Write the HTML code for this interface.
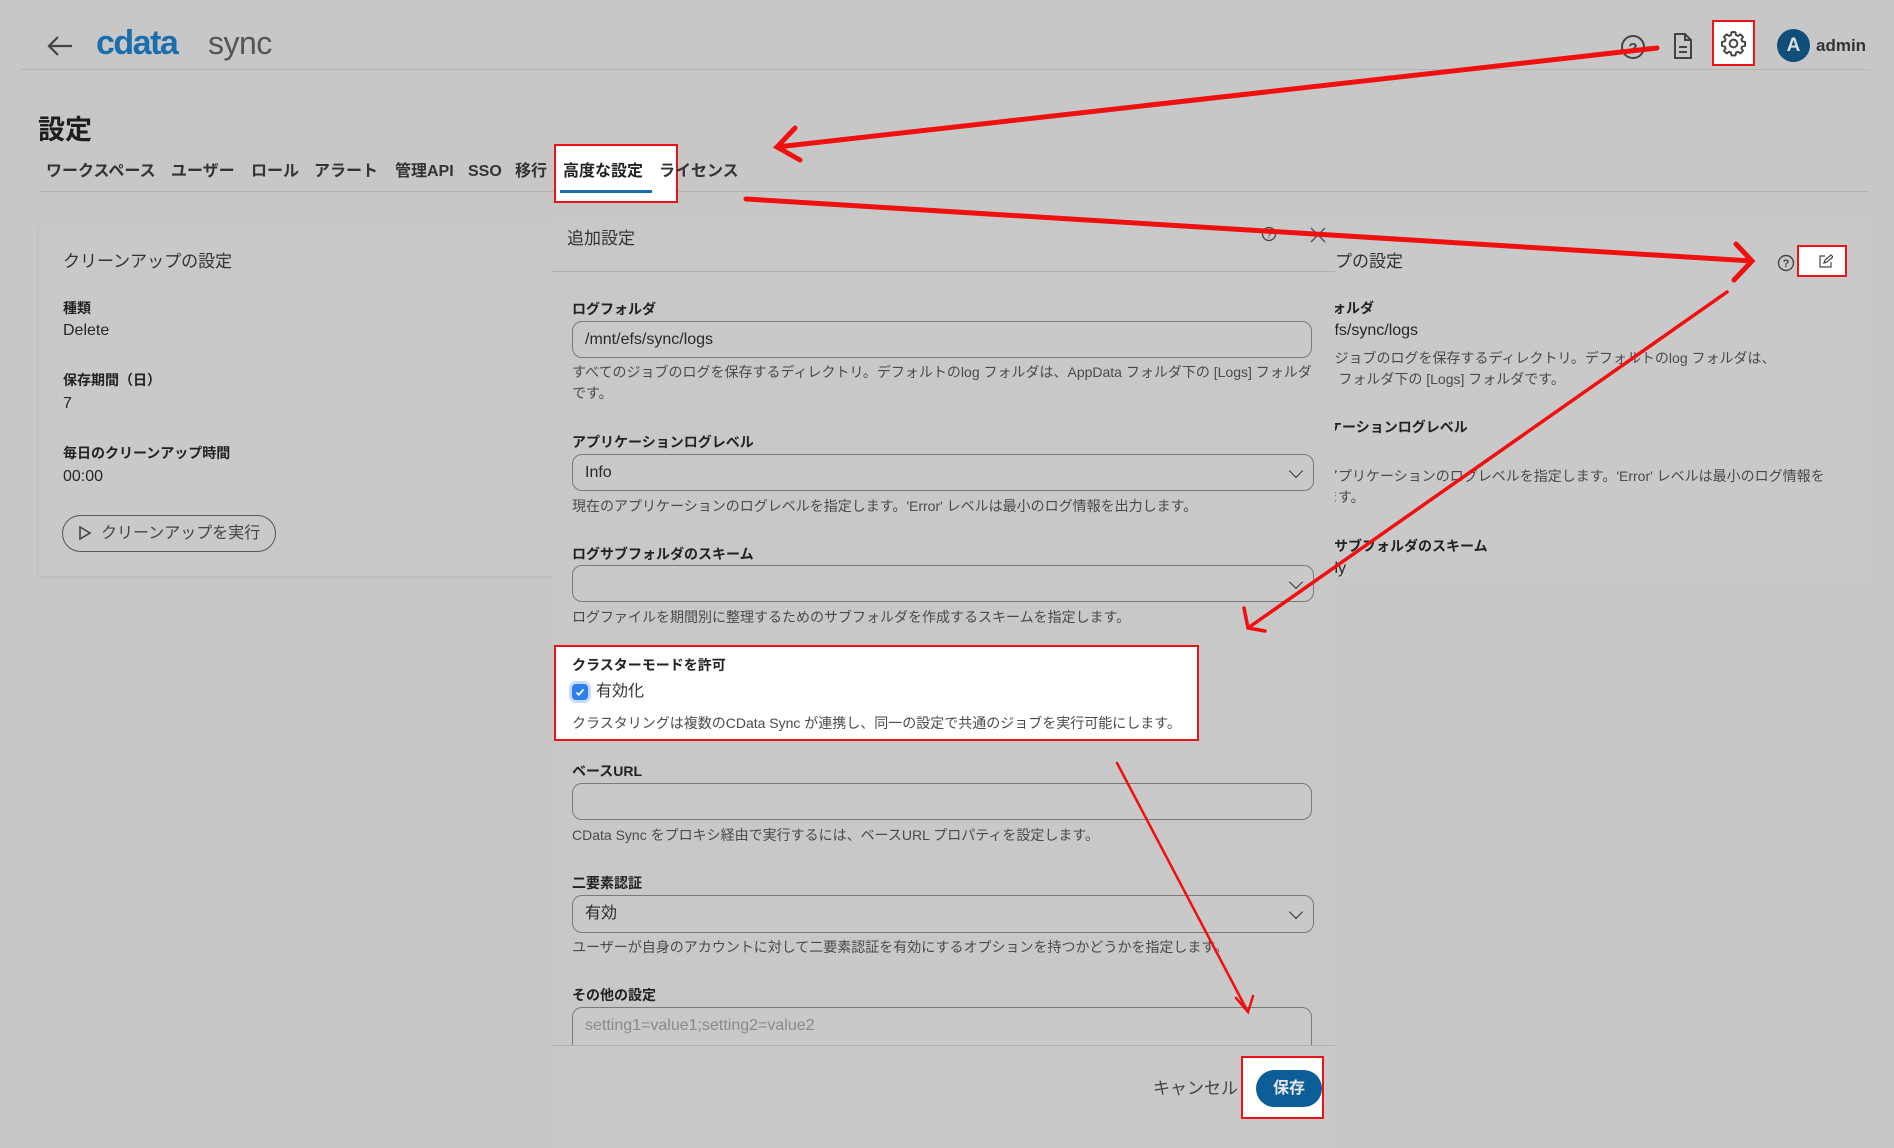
<!DOCTYPE html>
<html><head><meta charset="utf-8">
<style>
*{margin:0;padding:0;box-sizing:border-box}
body{width:1894px;height:1148px;background:#c7c7c7;font-family:"Liberation Sans","Noto Sans CJK JP",sans-serif;color:#262626;position:relative;overflow:hidden}
.a{position:absolute;white-space:nowrap}
.lbl{font-size:14px;font-weight:bold;color:#222}
.help{font-size:14px;color:#4a4a4a}
.inp{position:absolute;left:572px;width:740px;border:1px solid #7a7a7a;border-radius:10px;background:#c9c9c9;font-size:16px;padding-left:12px;color:#2a2a2a}
.chev{position:absolute;right:12px;top:50%;width:10px;height:10px;border-right:1.6px solid #333;border-bottom:1.6px solid #333;transform:translateY(-70%) rotate(45deg)}
.tab{font-size:16px;font-weight:bold;color:#333;top:162px;line-height:20px}
.red{position:absolute;border:2px solid #e8141a;background:#fff}
</style></head><body>
<!-- header -->
<div class="a" style="left:20px;top:69px;width:1850px;height:1px;background:#b5b5b5"></div>
<svg class="a" style="left:46px;top:34px" width="28" height="24" viewBox="0 0 28 24"><path d="M26 12H3M12 3L3 12l9 9" stroke="#444" stroke-width="2.2" fill="none"/></svg>
<div class="a" style="left:96px;top:24px;font-size:34px;font-weight:bold;color:#1a6eae;letter-spacing:-1.5px">cdata</div>
<div class="a" style="left:208px;top:25px;font-size:32px;color:#555;letter-spacing:-0.5px">sync</div>
<svg class="a" style="left:1619px;top:33px" width="28" height="28" viewBox="0 0 28 28"><circle cx="14" cy="14" r="11" stroke="#444" stroke-width="2" fill="none"/><text x="14" y="20" text-anchor="middle" font-size="15" font-weight="bold" fill="#444" font-family="Liberation Sans">?</text></svg>
<svg class="a" style="left:1672px;top:32px" width="22" height="28" viewBox="0 0 22 28"><path d="M3 2h10l6 6v18H3z M13 2v6h6 M7 15h8M7 20h8" stroke="#444" stroke-width="2" fill="none"/></svg>
<div class="red" style="left:1712px;top:20px;width:43px;height:46px"></div>
<svg class="a" style="left:1719px;top:29px" width="29" height="29" viewBox="0 0 24 24"><path d="M12 2.5l1.6.2.5 2.4 1.6.7 2-1.4 2.2 2.2-1.4 2 .7 1.6 2.4.5v3.2l-2.4.5-.7 1.6 1.4 2-2.2 2.2-2-1.4-1.6.7-.5 2.4h-3.2l-.5-2.4-1.6-.7-2 1.4-2.2-2.2 1.4-2-.7-1.6-2.4-.5v-3.2l2.4-.5.7-1.6-1.4-2 2.2-2.2 2 1.4 1.6-.7.5-2.4z" stroke="#444" stroke-width="1.6" fill="none" stroke-linejoin="round"/><circle cx="12" cy="12" r="3.2" stroke="#444" stroke-width="1.6" fill="none"/></svg>
<div class="a" style="left:1777px;top:29px;width:33px;height:33px;border-radius:50%;background:#0f4f7a;color:#ddd;font-size:19px;font-weight:bold;text-align:center;line-height:33px">A</div>
<div class="a" style="left:1816px;top:36px;font-size:17px;font-weight:bold;color:#333">admin</div>

<div class="a" style="left:38px;top:108px;font-size:27px;font-weight:bold;color:#1e1e1e">設定</div>
<div class="a" style="left:39px;top:191px;width:1830px;height:1px;background:#b3b3b3"></div>
<div class="red" style="left:554px;top:144px;width:124px;height:59px"></div>
<div class="a tab" style="left:46px">ワークスペース</div>
<div class="a tab" style="left:171px">ユーザー</div>
<div class="a tab" style="left:251px">ロール</div>
<div class="a tab" style="left:314px">アラート</div>
<div class="a tab" style="left:395px">管理API</div>
<div class="a tab" style="left:468px">SSO</div>
<div class="a tab" style="left:515px">移行</div>
<div class="a tab" style="left:563px;color:#222">高度な設定</div>
<div class="a" style="left:560px;top:190px;width:92px;height:3px;background:#1a6eae"></div>
<div class="a tab" style="left:659px">ライセンス</div>

<!-- left card -->
<div class="a" style="left:39px;top:223px;width:530px;height:353px;background:#c9c9c9;box-shadow:0 1px 3px rgba(0,0,0,.08)"></div>
<div class="a" style="left:63px;top:247px;font-size:17px;color:#333">クリーンアップの設定</div>
<div class="a lbl" style="left:63px;top:298px">種類</div>
<div class="a" style="left:63px;top:322px;font-size:16px">Delete</div>
<div class="a lbl" style="left:63px;top:370px">保存期間（日）</div>
<div class="a" style="left:63px;top:395px;font-size:16px">7</div>
<div class="a lbl" style="left:63px;top:443px">毎日のクリーンアップ時間</div>
<div class="a" style="left:63px;top:468px;font-size:16px">00:00</div>
<div class="a" style="left:62px;top:515px;width:214px;height:37px;border:1.3px solid #555;border-radius:19px;font-size:16px;color:#444;padding:8px 0 0 38px;line-height:20px">クリーンアップを実行</div>
<svg class="a" style="left:78px;top:525px" width="14" height="16" viewBox="0 0 14 16"><path d="M2 2l10 6-10 6z" stroke="#444" stroke-width="1.6" fill="none"/></svg>

<!-- right card -->
<div class="a" style="left:1290px;top:223px;width:580px;height:354px;background:#c9c9c9"></div>
<div class="a" style="left:1318px;top:247px;font-size:17px;color:#333">ップの設定</div>
<div class="a lbl" style="left:1290px;top:298px">ログフォルダ</div>
<div class="a" style="left:1290px;top:322px;font-size:16px">/mnt/efs/sync/logs</div>
<div class="a help" style="left:1280px;top:348px;line-height:21px">すべてのジョブのログを保存するディレクトリ。デフォルトのlog フォルダは、<br>AppData フォルダ下の [Logs] フォルダです。</div>
<div class="a lbl" style="left:1286px;top:417px">アプリケーションログレベル</div>
<div class="a help" style="left:1282px;top:466px;line-height:21px">現在のアプリケーションのログレベルを指定します。'Error' レベルは最小のログ情報を<br>出力します。</div>
<div class="a lbl" style="left:1306px;top:536px">ログサブフォルダのスキーム</div>
<div class="a" style="left:1290px;top:560px;font-size:16px">Monthly</div>
<svg class="a" style="left:1777px;top:254px" width="18" height="18" viewBox="0 0 18 18"><circle cx="9" cy="9" r="7.5" stroke="#444" stroke-width="1.4" fill="none"/><text x="9" y="13" text-anchor="middle" font-size="11" font-weight="bold" fill="#444" font-family="Liberation Sans">?</text></svg>
<div class="red" style="left:1797px;top:245px;width:50px;height:32px"></div>
<svg class="a" style="left:1818px;top:254px" width="15" height="15" viewBox="0 0 15 15"><path d="M7 2H2v11h11V8 M6 9l1-3 6-5 2 2-6 5z" stroke="#444" stroke-width="1.2" fill="none"/></svg>

<!-- dialog -->
<div class="a" style="left:552px;top:215px;width:783px;height:933px;background:#c8c8c8"></div>
<div class="a" style="left:567px;top:224px;font-size:17px;color:#333">追加設定</div>
<svg class="a" style="left:1261px;top:226px" width="16" height="16" viewBox="0 0 16 16"><circle cx="8" cy="8" r="6.5" stroke="#444" stroke-width="1.3" fill="none"/><text x="8" y="12" text-anchor="middle" font-size="10" fill="#444" font-family="Liberation Sans">?</text></svg>
<svg class="a" style="left:1309px;top:226px" width="18" height="18" viewBox="0 0 18 18"><path d="M2 2l14 14M16 2L2 16" stroke="#555" stroke-width="1.5"/></svg>
<div class="a" style="left:552px;top:271px;width:783px;height:1px;background:#b0b0b0"></div>

<div class="a lbl" style="left:572px;top:299px">ログフォルダ</div>
<div class="inp" style="top:321px;height:37px;line-height:35px">/mnt/efs/sync/logs</div>
<div class="a help" style="left:572px;top:362px;line-height:21px">すべてのジョブのログを保存するディレクトリ。デフォルトのlog フォルダは、AppData フォルダ下の [Logs] フォルダ<br>です。</div>

<div class="a lbl" style="left:572px;top:432px">アプリケーションログレベル</div>
<div class="inp" style="top:454px;height:37px;line-height:35px;width:742px">Info<span class="chev"></span></div>
<div class="a help" style="left:572px;top:496px">現在のアプリケーションのログレベルを指定します。'Error' レベルは最小のログ情報を出力します。</div>

<div class="a lbl" style="left:572px;top:544px">ログサブフォルダのスキーム</div>
<div class="inp" style="top:565px;height:37px;width:742px"><span class="chev"></span></div>
<div class="a help" style="left:572px;top:607px">ログファイルを期間別に整理するためのサブフォルダを作成するスキームを指定します。</div>

<div class="red" style="left:554px;top:645px;width:645px;height:96px"></div>
<div class="a lbl" style="left:572px;top:655px">クラスターモードを許可</div>
<div class="a" style="left:572px;top:684px;width:16px;height:16px;border-radius:4px;background:#2d7ff0;box-shadow:0 0 0 3px #c6dbff"></div>
<svg class="a" style="left:574px;top:686px" width="12" height="12" viewBox="0 0 12 12"><path d="M2.5 6.5l2.3 2.3L9.5 3.5" stroke="#fff" stroke-width="1.8" fill="none"/></svg>
<div class="a" style="left:596px;top:682px;font-size:16px;color:#333;line-height:20px">有効化</div>
<div class="a help" style="left:572px;top:713px">クラスタリングは複数のCData Sync が連携し、同一の設定で共通のジョブを実行可能にします。</div>

<div class="a lbl" style="left:572px;top:761px">ベースURL</div>
<div class="inp" style="top:783px;height:37px"></div>
<div class="a help" style="left:572px;top:825px">CData Sync をプロキシ経由で実行するには、ベースURL プロパティを設定します。</div>

<div class="a lbl" style="left:572px;top:873px">二要素認証</div>
<div class="inp" style="top:895px;height:38px;line-height:36px;width:742px">有効<span class="chev"></span></div>
<div class="a help" style="left:572px;top:937px">ユーザーが自身のアカウントに対して二要素認証を有効にするオプションを持つかどうかを指定します。</div>

<div class="a lbl" style="left:572px;top:985px">その他の設定</div>
<div class="inp" style="top:1007px;height:50px;line-height:36px;color:#8a8a8a;border-bottom:none;border-radius:10px 10px 0 0">setting1=value1;setting2=value2</div>
<div class="a" style="left:552px;top:1045px;width:783px;height:103px;background:#c8c8c8"></div>
<div class="a" style="left:552px;top:1045px;width:783px;height:1px;background:#b0b0b0"></div>
<div class="a" style="left:1153px;top:1079px;font-size:17px;color:#444;line-height:20px">キャンセル</div>
<div class="red" style="left:1241px;top:1056px;width:83px;height:63px"></div>
<div class="a" style="left:1256px;top:1070px;width:66px;height:37px;border-radius:19px;background:#0c5e98;color:#e6e6e6;font-size:16px;font-weight:bold;text-align:center;line-height:37px">保存</div>

<!-- arrows -->
<svg class="a" style="left:0;top:0" width="1894" height="1148" viewBox="0 0 1894 1148" fill="none" stroke="#f01010" stroke-linecap="round">
<path d="M1657 48L777 147M795 128L777 147L800 160" stroke-width="5"/>
<path d="M746 199L1752 261M1736 244L1752 261L1734 280" stroke-width="5"/>
<path d="M1727 292L1248 628M1244 608L1248 628L1265 631" stroke-width="3.5"/>
<path d="M1117 763L1248 1012M1236 998L1248 1012L1253 996" stroke-width="2.5"/>
</svg>
</body></html>
